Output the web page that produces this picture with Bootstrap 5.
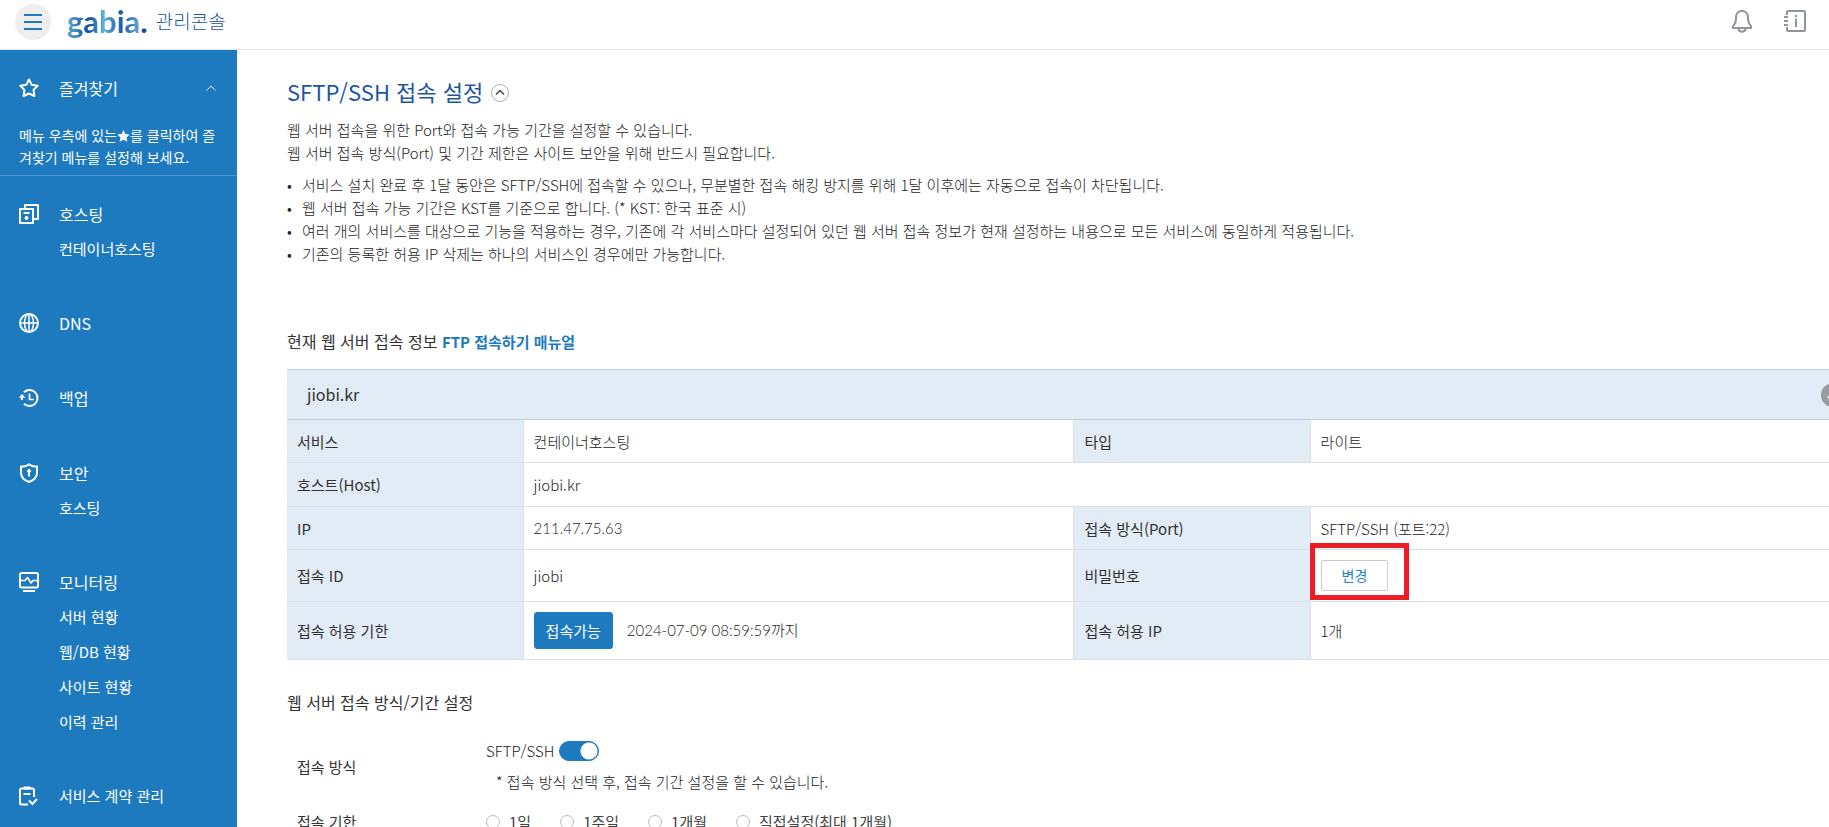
<!DOCTYPE html>
<html lang="ko">
<head>
<meta charset="utf-8">
<meta name="viewport" content="width=device-width, initial-scale=1">
<title>gabia. 관리콘솔</title>
<link href="https://cdn.jsdelivr.net/npm/bootstrap@5.3.0/dist/css/bootstrap.min.css" rel="stylesheet">
<style>
  :root { --blue: #1e7abf; --navy: #1d57a0; --pale: #e2ecf6; --rule: #dae0e6; --rule-dark: #c2cedb; }
  html, body { height: 100%; }
  body { font-family: "Noto Sans CJK KR", sans-serif; font-size: 15px; line-height: 23px; color: #333; overflow: hidden; }
  .topbar { height: 50px; padding: 0 22px 0 15px; border-bottom: 1px solid #e5e5e5; }
  .topbar-inner { height: 42px; }
  .menu-btn { width: 36px; height: 36px; margin-top: 2px; background: #eee; }
  .logo { font-family: Lato, sans-serif; font-weight: 700; font-size: 31px; line-height: 36px; }
  .logo-word { background: linear-gradient(90deg, #5fa9d6, #0f4f98 30%, #5fb0dc 50%, #1b5ca3 75%, #5fa9d6); -webkit-background-clip: text; background-clip: text; color: transparent; }
  .logo-dot { color: #164f96; }
  .console-name { color: var(--navy); font-size: 19px; font-weight: 300; line-height: 28px; }
  .tool-btn { color: #8f959e; }
  .sidebar { width: 237px; background: var(--blue); color: #fff; font-size: 15px; }
  .sidebar a { color: #fff; text-decoration: none; }
  .fav { height: 126px; padding: 26px 19px 0; border-bottom: 1px solid #4893cc; margin-bottom: 26px; }
  .fav p { font-size: 14px; line-height: 22px; margin-top: 24px; }
  .fav p svg { vertical-align: -1px; }
  .chevron { margin: 0 2px 0 auto; }
  .menu-head { display: grid; grid-template-columns: 20px auto 1fr; column-gap: 20px; align-items: center; font-size: 16px; line-height: 24px; }
  .menu-long { font-size: 15px; }
  .menu-group { padding: 0 19px; margin-bottom: 50px; }
  .menu-single { margin-bottom: 51px; }
  .menu-sub { padding: 11px 0 0 40px; line-height: 24px; }
  .main { padding: 25px 0 0 50px; min-width: 0; overflow: hidden; }
  .content { margin-right: -32px; }
  .page-title { color: var(--navy); font-size: 22px; line-height: 32px; }
  .title-fold { margin-top: 4px; }
  .thin { font-weight: 300; color: #222; }
  .intro { margin-top: 11px; }
  .bullets { margin-top: 9px; padding-left: 15px; list-style: none; }
  .bullets li::before { content: "•"; float: left; margin-left: -15px; }
  .section-title { font-size: 16px; line-height: 24px; margin-top: 30px; }
  .section-title a { color: var(--blue); font-size: 15px; text-decoration: none; }
  .section-first { margin-top: 64px; }
  .info { table-layout: fixed; border-top: 1px solid #eef1f4; margin: 15px 0 0; color: #333; }
  .info > :not(caption) > * > * { padding: 0 10px; border-bottom: 1px solid var(--rule); box-shadow: none; vertical-align: middle; background: none; }
  .info .col-name { width: 15%; } .info .col-value { width: 35%; }
  .info tbody th { background: var(--pale); font-weight: 400; border-right: 1px solid var(--rule); }
  .info tbody td { font-weight: 300; color: #222; }
  .info tbody td:not(:last-child) { border-right: 1px solid var(--rule); }
  .info thead th { background: var(--pale); font-size: 16px; font-weight: 400; height: 50px; padding: 0 16px 0 20px; border-top: 1px solid var(--rule-dark); border-bottom: 1px solid var(--rule-dark); }
  .info .row-a { height: 43px; } .info .row-b { height: 44px; } .info .row-c { height: 52px; } .info .row-d { height: 58px; }
  .digits { font-family: Lato, "Noto Sans CJK KR", sans-serif; }
  .fold { width: 24px; height: 24px; background: #989ca1; }
  .btn-state { background: var(--blue); color: #fff; font-size: 15px; line-height: 23px; padding: 6px 11px; border-radius: 3px; border: 1px solid var(--blue); margin-right: 14px; }
  .btn-change { color: #2181cc; background: #fff; font-size: 14px; line-height: 21px; padding: 4px 20px; border: 1px solid #ccc; border-radius: 2px; }
  .mark-box { top: -17px; left: -11px; width: 99px; height: 57px; border: 5px solid #ee1c25; pointer-events: none; }
  .settings { margin-top: 25px; }
  .set-label { width: 199px; padding-left: 10px; }
  .switch .form-check-input { width: 40px; height: 20px; margin: 0 0 0 5px; border-color: var(--blue); box-shadow: none;
    background-color: var(--blue); background-image: radial-gradient(circle at 29px 9px, #fff 8px, transparent 9px); background-size: 100% 100%; background-position: 0 0; }
  .note { padding-left: 10px; margin-top: 8px; }
  .term-row { margin-top: 17px; }
  .choices { gap: 29px; }
  .choice { color: #444; }
  .choice .form-check-input { width: 14px; height: 14px; margin: 0 9px 0 0; border-color: #bbb; }
</style>
</head>
<body class="d-flex flex-column">
<header class="topbar flex-shrink-0">
  <div class="topbar-inner d-flex align-items-center">
    <button class="menu-btn btn rounded-circle p-0 d-flex align-items-center justify-content-center border-0" type="button" aria-label="메뉴">
      <svg width="18" height="16" viewBox="0 0 18 16" stroke="#1e7abf" stroke-width="2"><path d="M0 1h18M0 8h18M0 15h18"/></svg>
    </button>
    <a class="logo text-decoration-none ms-3" href="#"><span class="logo-word">gabia</span><span class="logo-dot">.</span></a>
    <span class="console-name ms-2">관리콘솔</span>
    <div class="ms-auto d-flex" style="gap:30px">
      <button class="tool-btn btn p-0 border-0 d-flex" type="button" aria-label="알림">
        <svg width="22" height="24" viewBox="0 0 22 24" fill="none" stroke="currentColor" stroke-width="2" stroke-linejoin="round"><path d="M11 2C7 2 5 5 5 8.500c0 5-1 7-3 8.500V19h18v-2c-2-1.500-3-3.500-3-8.500C17 5 15 2 11 2z"/><path d="M7.500 20c.5 3.500 6.500 3.500 7 0"/></svg>
      </button>
      <button class="tool-btn btn p-0 border-0 d-flex" type="button" aria-label="안내">
        <svg width="24" height="24" viewBox="0 0 24 24" fill="none" stroke="currentColor" stroke-width="2"><path d="M4 6V3q0-1 1-1h16q1 0 1 1v18q0 1-1 1H5q-1 0-1-1v-3M1 8h4M1 12h4M1 16h4M13 9.500V18M13 6v2"/></svg>
      </button>
    </div>
  </div>
</header>
<div class="d-flex flex-grow-1 overflow-hidden">
  <nav class="sidebar flex-shrink-0 overflow-hidden" aria-label="주 메뉴">
    <div class="fav">
      <div class="menu-head">
        <svg width="20" height="20" viewBox="0 0 20 20" fill="none" stroke="#fff" stroke-width="2" stroke-linejoin="round"><path d="M10 1.500l2.700 5.200 6 1-4.200 4.200.9 6.100L10 15.500 4.600 18l.9-6.100L1.300 7.700l6-1z"/></svg>
        <a href="#">즐겨찾기</a>
        <svg class="chevron" width="10" height="6" viewBox="0 0 10 6" fill="none" stroke="#fff"><path d="M.5 5.500L5 1l4.500 4.500"/></svg>
      </div>
      <p class="mb-0">메뉴 우측에 있는<svg width="13" height="12" viewBox="0 0 14 13" fill="#fff"><path d="M7 0l2 4.200 4.700.6-3.400 3.300.9 4.700L7 10.600l-4.200 2.200.9-4.700L.3 4.800 5 4.200z"/></svg>를 클릭하여 즐겨찾기 메뉴를 설정해 보세요.</p>
    </div>
    <div class="menu-group">
      <div class="menu-head">
        <svg width="20" height="20" viewBox="0 0 20 20" fill="none" stroke="#fff" stroke-width="2" stroke-linejoin="round"><path d="M1 5h13v14H1z"/><path d="M6 4V1h13v14h-4M4.500 9h6"/><circle cx="7.500" cy="14" r="1" fill="#fff"/></svg>
        <a href="#">호스팅</a>
      </div>
      <div class="menu-sub"><a href="#">컨테이너호스팅</a></div>
    </div>
    <div class="menu-group menu-single">
      <div class="menu-head">
        <svg width="20" height="20" viewBox="0 0 20 20" fill="none" stroke="#fff" stroke-width="2"><circle cx="10" cy="10" r="9"/><ellipse cx="10" cy="10" rx="4.500" ry="9" stroke-width="1.500"/><path d="M10 1v18M1 10h18" stroke-width="1.500"/></svg>
        <a href="#">DNS</a>
      </div>
    </div>
    <div class="menu-group menu-single">
      <div class="menu-head">
        <svg width="20" height="20" viewBox="0 0 20 20" fill="none" stroke="#fff" stroke-width="2"><path d="M5 4.200A8 8 0 1 1 5 15.800M3 12Q2.600 10 3 8.500"/><path d="M0 9.800L3 6l3.500 3.800z" fill="#fff" stroke="none"/><path d="M10.500 5.500v6H15" stroke-width="1.700"/></svg>
        <a href="#">백업</a>
      </div>
    </div>
    <div class="menu-group">
      <div class="menu-head">
        <svg width="20" height="20" viewBox="0 0 20 20" fill="none" stroke="#fff" stroke-width="2" stroke-linejoin="round"><path d="M10 1.200C12 3 15 3.500 18 3.500V10c0 5-4 7.500-8 9-4-1.500-8-4-8-9V3.500c3 0 6-.5 8-2.300z"/><circle cx="10" cy="8" r="1.500" fill="#fff" stroke-width="1"/><path d="M10 8v5.500"/></svg>
        <a href="#">보안</a>
      </div>
      <div class="menu-sub"><a href="#">호스팅</a></div>
    </div>
    <div class="menu-group">
      <div class="menu-head">
        <svg width="20" height="20" viewBox="0 0 20 20" fill="none" stroke="#fff" stroke-width="2" stroke-linejoin="round"><rect x="1" y="1" width="18" height="14.500" rx="1.500"/><path d="M2 8.500h4l2.500-3 3.500 5.500 2-2.500h4" stroke-width="1.600"/><path d="M4 19h12"/></svg>
        <a href="#">모니터링</a>
      </div>
      <div class="menu-sub"><a href="#">서버 현황</a></div>
      <div class="menu-sub"><a href="#">웹/DB 현황</a></div>
      <div class="menu-sub"><a href="#">사이트 현황</a></div>
      <div class="menu-sub"><a href="#">이력 관리</a></div>
    </div>
    <div class="menu-group">
      <div class="menu-head">
        <svg width="20" height="20" viewBox="0 0 20 20" fill="none" stroke="#fff" stroke-width="2"><path d="M9 18.500H2.500Q1 18.500 1 17V4q0-1.500 1.500-1.500h11Q15 2.500 15 4v7M4.500 8h7"/><path d="M4.500 2h7" stroke-width="3"/><path d="M10 14.500l3.500 3.500 4.500-5"/></svg>
        <a class="menu-long" href="#">서비스 계약 관리</a>
      </div>
    </div>
  </nav>
  <main class="main flex-grow-1">
    <div class="content">
      <div class="d-flex align-items-center">
        <h1 class="page-title mb-0 fw-normal">SFTP/SSH 접속 설정</h1>
        <button class="title-fold btn p-0 border-0 ms-2 d-flex" type="button" aria-label="설명 접기">
          <svg width="18" height="18" viewBox="0 0 18 18" fill="none" stroke="#aaa"><circle cx="9" cy="9" r="8.500"/><path d="M5 10.500l4-4 4 4" stroke="#444" stroke-width="1.500"/></svg>
        </button>
      </div>
      <p class="intro thin mb-0">웹 서버 접속을 위한 Port와 접속 가능 기간을 설정할 수 있습니다.<br>웹 서버 접속 방식(Port) 및 기간 제한은 사이트 보안을 위해 반드시 필요합니다.</p>
      <ul class="bullets thin mb-0">
        <li>서비스 설치 완료 후 1달 동안은 SFTP/SSH에 접속할 수 있으나, 무분별한 접속 해킹 방지를 위해 1달 이후에는 자동으로 접속이 차단됩니다.</li>
        <li>웹 서버 접속 가능 기간은 KST를 기준으로 합니다. (* KST: 한국 표준 시)</li>
        <li>여러 개의 서비스를 대상으로 기능을 적용하는 경우, 기존에 각 서비스마다 설정되어 있던 웹 서버 접속 정보가 현재 설정하는 내용으로 모든 서비스에 동일하게 적용됩니다.</li>
        <li>기존의 등록한 허용 IP 삭제는 하나의 서비스인 경우에만 가능합니다.</li>
      </ul>
      <h2 class="section-title section-first fw-normal mb-0">현재 웹 서버 접속 정보 <a class="fw-bold" href="#">FTP 접속하기 매뉴얼</a></h2>
      <table class="info table">
        <colgroup><col class="col-name"><col class="col-value"><col class="col-name"><col class="col-value"></colgroup>
        <thead>
          <tr><th colspan="4" scope="colgroup"><div class="d-flex align-items-center justify-content-between">jiobi.kr
            <button class="fold btn rounded-circle border-0 p-0 d-flex align-items-center justify-content-center" type="button" aria-label="접기"><svg width="12" height="8" viewBox="0 0 12 8" fill="none" stroke="#fff" stroke-width="2"><path d="M1 7l5-5 5 5"/></svg></button></div></th></tr>
        </thead>
        <tbody>
          <tr class="row-a"><th scope="row">서비스</th><td>컨테이너호스팅</td><th scope="row">타입</th><td>라이트</td></tr>
          <tr class="row-b"><th scope="row">호스트(Host)</th><td colspan="3">jiobi.kr</td></tr>
          <tr class="row-a"><th scope="row">IP</th><td class="digits">211.47.75.63</td><th scope="row">접속 방식(Port)</th><td>SFTP/SSH (포트:22)</td></tr>
          <tr class="row-c"><th scope="row">접속 ID</th><td>jiobi</td><th scope="row">비밀번호</th><td><div class="position-relative d-flex"><button class="btn-change" type="button">변경</button><span class="mark-box position-absolute"></span></div></td></tr>
          <tr class="row-d"><th scope="row">접속 허용 기한</th><td><div class="d-flex align-items-center"><button class="btn-state" type="button">접속가능</button><span class="digits">2024-07-09 08:59:59까지</span></div></td><th scope="row">접속 허용 IP</th><td>1개</td></tr>
        </tbody>
      </table>
      <h2 class="section-title fw-normal mb-0">웹 서버 접속 방식/기간 설정</h2>
      <div class="settings">
        <div class="d-flex align-items-center">
          <div class="set-label">접속 방식</div>
          <div class="thin">
            <div class="switch form-switch p-0 d-flex align-items-center"><label for="sftp">SFTP/SSH</label><input class="form-check-input float-none" type="checkbox" role="switch" id="sftp" checked></div>
            <div class="note">* 접속 방식 선택 후, 접속 기간 설정을 할 수 있습니다.</div>
          </div>
        </div>
        <div class="term-row d-flex align-items-center" role="radiogroup" aria-labelledby="term">
          <div class="set-label" id="term">접속 기한</div>
          <div class="choices d-flex">
            <div class="choice d-flex align-items-center"><input class="form-check-input" type="radio" name="term" id="t1"><label for="t1">1일</label></div>
            <div class="choice d-flex align-items-center"><input class="form-check-input" type="radio" name="term" id="t2"><label for="t2">1주일</label></div>
            <div class="choice d-flex align-items-center"><input class="form-check-input" type="radio" name="term" id="t3"><label for="t3">1개월</label></div>
            <div class="choice d-flex align-items-center"><input class="form-check-input" type="radio" name="term" id="t4"><label for="t4">직접설정(최대 1개월)</label></div>
          </div>
        </div>
      </div>
    </div>
  </main>
</div>
<script src="https://cdn.jsdelivr.net/npm/bootstrap@5.3.0/dist/js/bootstrap.bundle.min.js"></script>
</body>
</html>
